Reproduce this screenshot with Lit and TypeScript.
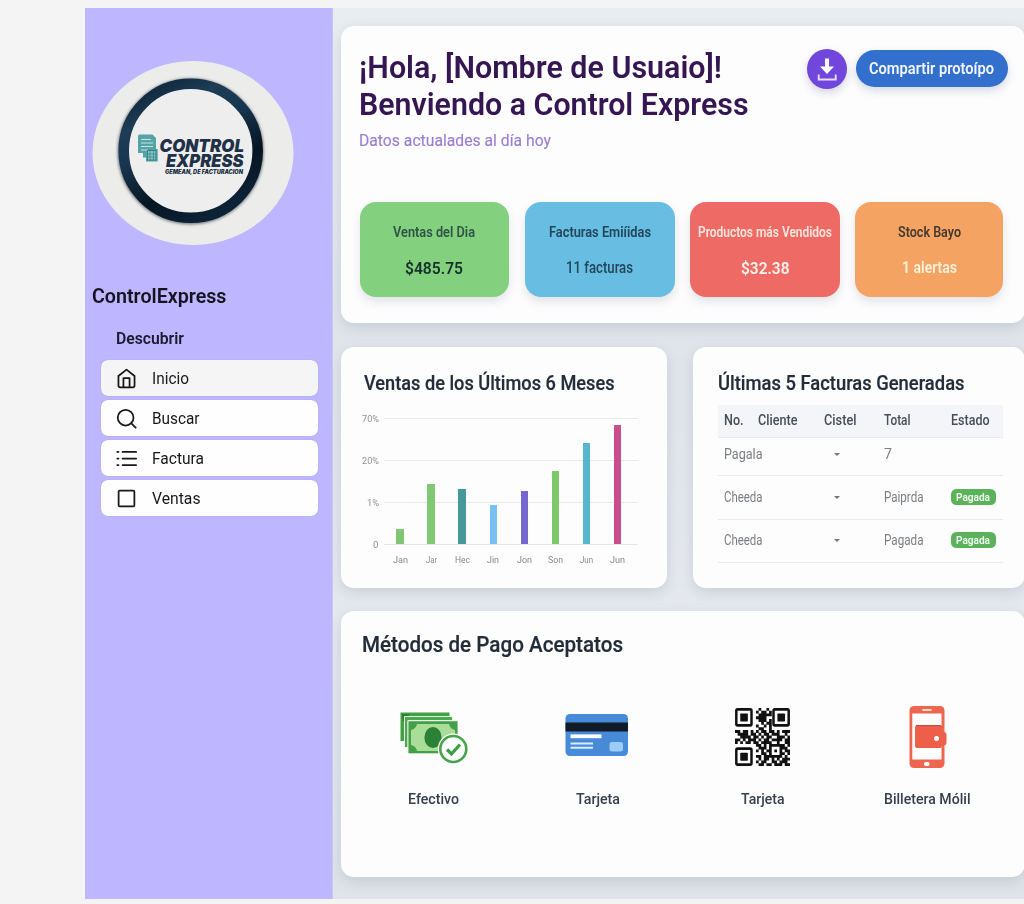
import { LitElement, html, svg, css } from "lit";
import { customElement, property, query } from "lit/decorators.js";

/** A single line of text stretched or narrowed to an exact measure. */
@customElement("fit-text")
class FitText extends LitElement {
  @property({ type: Number }) w = 0;
  @property() text = "";
  @query(".line") line!: HTMLElement;
  static styles = css`
    :host { display: block; flex: none; white-space: nowrap; }
    .line { display: inline-block; transform-origin: 0 50%; vertical-align: top; }
  `;
  updated() {
    this.style.width = `${this.w}px`;
    this.line.style.transform = "none";
    const natural = this.line.getBoundingClientRect().width;
    if (natural) this.line.style.transform = `scaleX(${this.w / natural})`;
  }
  render() {
    return html`<span class="line">${this.text}</span>`;
  }
}

const t = (text: string, w: number) => html`<fit-text .text=${text} .w=${w}></fit-text>`;

const icons = {
  home: svg`<path d="M2.800 9.200 12 1.800l9.200 7.400V20a2 2 0 0 1-2 2H4.800a2 2 0 0 1-2-2z"/><path d="M8.500 21.500V11.500h7v10"/>`,
  search: svg`<circle cx="11" cy="11" r="9"/><path d="m17.500 17.500 5 5"/>`,
  list: svg`<path d="M7.500 4.500H23M7.500 12H23M7.500 19.500H23M1.500 4.500h1.300M1.500 12h1.300M1.500 19.500h1.300"/>`,
  square: svg`<rect x="3" y="3" width="18" height="18" rx="1.200"/>`,
};

const nav = [
  { icon: icons.home, label: "Inicio", w: 37, active: true },
  { icon: icons.search, label: "Buscar", w: 47.5 },
  { icon: icons.list, label: "Factura", w: 52 },
  { icon: icons.square, label: "Ventas", w: 48.5 },
];

const stats = [
  { cls: "green", label: "Ventas del Dia", lw: 82, value: "$485.75", vw: 58 },
  { cls: "blue", label: "Facturas Emiíidas", lw: 102, value: "11 facturas", vw: 67 },
  { cls: "red", label: "Productos más Vendidos", lw: 134, value: "$32.38", vw: 48.5 },
  { cls: "orange", label: "Stock Bayo", lw: 63, value: "1 alertas", vw: 55 },
];

const bars = [
  { label: "Jan", w: 15, h: 15, c: "#80c674" },
  { label: "Jar", w: 11, h: 60, c: "#80c874" },
  { label: "Hec", w: 15, h: 55, c: "#46999a" },
  { label: "Jin", w: 12, h: 39.5, c: "#78c0f1" },
  { label: "Jon", w: 15, h: 53, c: "#7468ce" },
  { label: "Son", w: 15, h: 73, c: "#7dc869" },
  { label: "Jun", w: 13, h: 101.5, c: "#58b5d0" },
  { label: "Jun", w: 15, h: 119.5, c: "#c94f8c" },
];

/* Data modules only; the three finder squares are drawn as shapes. */
const QR = [
  "000000000100100000000",
  "000000001011010000000",
  "000000000111110000000",
  "000000001111000000000",
  "000000000111010000000",
  "000000000010110000000",
  "000000001001010000000",
  "000000000110010000000",
  "110110101011011010111",
  "011110110101101110010",
  "001111011010110011101",
  "110101110101101111011",
  "101011011011110010011",
  "000000001101011111101",
  "000000000111010001110",
  "000000001010110101011",
  "000000000011010001101",
  "000000001101111111010",
  "000000000101101010111",
  "000000001011001101110",
  "000000000110110111011",
];
const qrPath = QR.map((row, y) =>
  [...row].map((b, x) => (b === "1" ? `M${x} ${y}h1.03v1.03h-1.03z` : "")).join("")
).join("");
const finder = (x: number, y: number) => svg`
  <rect x=${x + 0.5} y=${y + 0.5} width="5.800" height="5.800" rx=".5" fill="none" stroke="#111" stroke-width=".95"/>
  <rect x=${x + 2} y=${y + 2} width="2.900" height="2.900" rx=".3" fill="#111"/>`;

const cash = html`<svg width="70" height="56" viewBox="399 710 70 56">
  <path d="M400.500 712.500h49v4h-45v24.500h-4z" fill="#43a047"/>
  <path d="M402 714h8l-7 8z" fill="#2c7d35"/>
  <path d="M404.500 716.500h48v4h-44.500v27h-3.500z" fill="#4aa84e" stroke="#fff" stroke-width=".8"/>
  <rect x="408" y="720.800" width="50" height="33" fill="#43a047" stroke="#fff" stroke-width=".8"/>
  <path d="M417 724h32q1 5 6 6v15q-5 1-6 6h-32q-1-5-6-6v-15q5-1 6-6z" fill="#a9dd98"/>
  <ellipse cx="433" cy="737.500" rx="8.600" ry="10.600" fill="#2b8136"/>
  <circle cx="453.300" cy="749" r="15.500" fill="#fff"/>
  <circle cx="453.300" cy="749" r="13" fill="#fbfffb" stroke="#46a34b" stroke-width="2.600"/>
  <path d="m447 749.500 4.500 4.500 8.500-9.500" fill="none" stroke="#3c9d45" stroke-width="3.200"/>
</svg>`;
const card = html`<svg width="64" height="44" viewBox="0 0 64 44">
  <rect x=".5" y="1" width="62.500" height="42" rx="4.500" fill="#478ad8"/>
  <rect x=".5" y="9.500" width="62.500" height="9" fill="#111a27"/>
  <path d="M5.500 23.300h31" stroke="#fff" stroke-width="3.800"/>
  <path d="M5.500 30.500h22.500M5.500 34.800h22.500" stroke="#d9edff" stroke-width="2"/>
  <rect x="44.500" y="29" width="13.500" height="9.500" rx="2.500" fill="#9dccf8"/>
</svg>`;
const qr = html`<svg width="55" height="58" viewBox="0 0 21 21" preserveAspectRatio="none">
  <path d=${qrPath} fill="#111"/>${finder(0, 0)}${finder(14.2, 0)}${finder(0, 14.2)}
</svg>`;
const phone = html`<svg width="38" height="64" viewBox="0 0 38 64">
  <rect x=".5" y="1" width="35" height="62" rx="4.500" fill="#ee6550"/>
  <rect x="3.300" y="8.500" width="29.200" height="46" fill="#fff"/>
  <path d="M14 5h8" stroke="#fff" stroke-width="1.700" stroke-linecap="round"/>
  <rect x="15" y="57" width="5.500" height="4" rx="1.800" fill="#fff"/>
  <path d="M6 23q0-3 3-3h21q3 0 3 3v4h1.500q3 0 3 3v7.500q0 3-3 3H33v.5q0 2-2 2H8q-2 0-2-2z" fill="#ee5f4a"/>
  <path d="M7 20.500h23q2.500 0 3 2" fill="none" stroke="#c94a3b" stroke-width="1"/>
  <circle cx="27.500" cy="33.500" r="2.500" fill="#fff"/>
</svg>`;

const logo = html`<svg class="logo" viewBox="92 60 203 186">
  <defs>
    <linearGradient id="ring" x1=".1" y1="0" x2=".6" y2="1">
      <stop offset="0" stop-color="#0d2235"/><stop offset=".25" stop-color="#1d3d56"/>
      <stop offset=".45" stop-color="#17364f"/><stop offset=".75" stop-color="#071522"/><stop offset="1" stop-color="#0c2236"/>
    </linearGradient>
    <filter id="soft" x="-20%" y="-20%" width="140%" height="140%"><feGaussianBlur stdDeviation="1.400"/></filter>
  </defs>
  <ellipse cx="193" cy="153" rx="100.500" ry="92" fill="#ececeb"/>
  <circle cx="190.600" cy="151.500" r="67.500" fill="none" stroke="#72777e" stroke-width="11" filter="url(#soft)"/>
  <circle cx="190.700" cy="150.800" r="67" fill="#eeeeef" stroke="url(#ring)" stroke-width="10.600"/>
  <path d="M138 136q0-1.500 1.500-1.500h13l3.500 3.500v11h1.700V161.500H146v-4h-3V153h-5z" fill="#55a3a5"/>
  <path d="M141 139.500h10M141 143h12M141 146.500h12M141 150h7" stroke="#c4e3e2" stroke-width="1.200"/>
  <rect x="147.500" y="150.500" width="8.500" height="9.500" fill="#8cc5c5" stroke="#2f7f84" stroke-width=".9"/>
  <path d="M150 151v9M153.500 151v9M148 154h8M148 157h8" stroke="#39888c" stroke-width=".8"/>
  <g class="brand">
    <text x="159.500" y="151.800" font-size="17.500" textLength="84.500" lengthAdjust="spacingAndGlyphs">CONTROL</text>
    <text x="166" y="166.800" font-size="17" textLength="77.500" lengthAdjust="spacingAndGlyphs">EXPRESS</text>
    <text x="165" y="173.500" font-size="5.600" textLength="78" lengthAdjust="spacingAndGlyphs">GEMEAN, DE FACTURACION</text>
  </g>
</svg>`;

@customElement("app-root")
class AppRoot extends LitElement {
  static styles = css`
    :host {
      display: block; width: 1024px; height: 904px; overflow: hidden;
      background: #f4f4f4; font-family: Roboto, "Liberation Sans", sans-serif; color: #2a333f;
    }
    * { box-sizing: border-box; }
    .shell { display: flex; margin: 8px 0 0 85px; height: 891px; }
    aside { flex: none; width: 248px; background: #beb6fe; padding: 52px 0 0 7px; border-right: 1px solid #c9c4f8; }
    .logo { display: block; width: 203px; height: 186px; }
    .brand { font-family: Inter, sans-serif; font-weight: 900; font-style: italic; fill: #1f3146; }
    .name { margin: 38.500px 0 0 0; font-size: 19.500px; line-height: 24px; font-weight: 600; color: #15131f; }
    .section { margin: 20px 0 0 24px; font-size: 16px; line-height: 20px; font-weight: 600; color: #1c1930; }
    nav { display: grid; gap: 4px; margin: 11.500px 0 0 9px; width: 217px; }
    .item { display: flex; align-items: center; gap: 15px; height: 36px; padding-left: 15px; border-radius: 7px; background: #fefefe; font-size: 16px; color: #17171a; box-shadow: 0 0 1px #8f88d4; }
    .item.active { background: #f5f5f6; }
    .item svg { width: 21px; height: 21px; fill: none; stroke: #17171a; stroke-width: 2; stroke-linejoin: round; stroke-linecap: round; }
    main { flex: 1; display: grid; grid-template-rows: 297px 241px 266px; row-gap: 23.500px; padding: 18px 0 0 7.500px; background: linear-gradient(#e8edf1, #e0e5ea 38%, #e5e9ee 66%, #dfe4ea 96%); overflow: hidden; }
    .card { background: #fdfdfe; border-radius: 13px; box-shadow: 0 5px 14px rgba(96, 112, 134, .2); }
    .pair { display: grid; grid-template-columns: 326.500px 332px; column-gap: 26px; }
    .hero { padding: 23px 17.500px 0 19px; width: 684.500px; }
    .top { display: flex; justify-content: space-between; height: 152.500px; }
    h1, h2 { margin: 0; font-weight: 600; }
    h1 { font-size: 31px; line-height: 37px; color: #351652; }
    h1 fit-text, .sub { margin-left: -.5px; }
    .sub { font-size: 17px; line-height: 24px; margin-top: 5px; color: #9a7dd2; -webkit-text-stroke: .15px #9a7dd2; }
    .actions { display: flex; gap: 9px; margin-top: -1px; }
    .dl { width: 40px; height: 40px; margin-top: .5px; border-radius: 50%; background: #7146da; box-shadow: 0 4px 8px rgba(60, 50, 120, .2); }
    .pill { display: flex; align-items: center; justify-content: center; width: 152px; height: 37.500px; margin-top: 1.500px; border-radius: 19px; background: #3370cd; color: #f1f6ff; font-size: 16.500px; font-weight: 600; box-shadow: 0 4px 9px rgba(40, 60, 100, .18); }
    .stats { display: grid; grid-template-columns: 149.500px 150px 149.500px 148px; gap: 15.500px; margin-right: -2px; }
    .stat { display: flex; flex-direction: column; align-items: center; height: 95px; padding-top: 19px; border-radius: 16px; box-shadow: 0 5px 10px rgba(70, 80, 100, .14); }
    .label { font-size: 14px; line-height: 22px; font-weight: 600; }
    .value { margin-top: 14px; font-size: 17px; line-height: 22px; font-weight: 600; }
    .green { background: #83d07f; color: #2f5446; } .green .value { color: #15312a; }
    .blue { background: #67bee2; color: #224559; } .blue .value { font-weight: 500; font-size: 16px; }
    .red { background: #ed6b64; color: #ffe6df; } .red .value { color: #fff1eb; }
    .orange { background: #f4a363; color: #463a30; } .orange .value { color: #fff0da; font-size: 16px; }
    .chart-card { padding: 24px 0 0 21px; }
    h2 { font-size: 20px; line-height: 25px; font-weight: 500; color: #232d3a; -webkit-text-stroke: .2px #232d3a; }
    .chart-card h2 { margin-left: 2.500px; }
    .chart { display: grid; grid-template-columns: 17px 254px; column-gap: 5px; margin-top: 17.500px; }
    .ylab { height: 132px; display: flex; flex-direction: column; align-items: flex-end; gap: 30px; font-size: 9.500px; line-height: 12px; color: #8e9196; }
    .plot { height: 127px; margin-top: 5px; padding-left: 1px; display: grid; grid-template-columns: repeat(8, 31.100px); align-items: end; justify-items: center; background: linear-gradient(#e9eaec 0 1px, transparent 1px) 0 0 / 100% 42px; border-bottom: 1px solid #e3e4e7; }
    .bar { width: 7.500px; }
    .xlab { grid-column: 2; padding-left: 1px; margin-top: 8px; display: grid; grid-template-columns: repeat(8, 31.100px); justify-items: center; font-size: 9.500px; line-height: 13px; color: #85888e; }
    .table-card { padding: 24px 0 0 24.500px; }
    .table-card h2 { margin-left: .5px; }
    .row { display: grid; grid-template-columns: 34.500px 65.500px 60px 67px 1fr; align-items: center; width: 285.500px; padding-left: 6px; border-bottom: 1px solid #e9eaec; font-size: 14px; color: #7a7d82; }
    .head { height: 33px; margin-top: 9px; padding-bottom: 1px; background: #f4f5f8; font-weight: 500; color: #474d58; }
    .r1 { height: 38px; padding-bottom: 4px; } .r2 { height: 44px; } .r3 { height: 43px; padding-bottom: 1px; }
    .caret { margin-left: 10.500px; border: 3px solid transparent; border-top: 3.500px solid #74777c; border-bottom: 0; width: 0; }
    .wide { grid-column: span 2; }
    .badge { width: 45px; height: 15.500px; display: flex; align-items: center; justify-content: center; border-radius: 5.500px; background: #5cb25b; color: #effff0; font-size: 11.500px; font-weight: 600; }
    .pay { padding: 20.500px 0 0 21.500px; width: 684.500px; }
    .pay h2 { font-size: 21.500px; }
    .methods { display: grid; grid-template-columns: repeat(4, 164.500px); margin: 47.500px 0 0 -10.500px; }
    .method { display: flex; flex-direction: column; align-items: center; font-size: 14.500px; line-height: 20px; font-weight: 500; color: #36404d; }
    .pic { height: 65px; display: flex; align-items: center; margin-bottom: 20.500px; }
    .cash { padding-top: 2px; } .cc { padding: 0 2px 3px 0; } .mobile { padding-left: 2px; }
  `;

  private row(cls: string, first: string, total: string, tw: number, paid: boolean) {
    return html`<div class="row ${cls}">
      <div class="wide">${t(first, 38.5)}</div><i class="caret"></i>${t(total, tw)}
      ${paid ? html`<span class="badge">${t("Pagada", 34)}</span>` : ""}
    </div>`;
  }

  render() {
    return html`<div class="shell">
      <aside>
        ${logo}
        <div class="name">${t("ControlExpress", 134.5)}</div>
        <div class="section">${t("Descubrir", 68)}</div>
        <nav>${nav.map((n) => html`<div class="item ${n.active ? "active" : ""}">
          <svg viewBox="0 0 24 24">${n.icon}</svg>${t(n.label, n.w)}</div>`)}</nav>
      </aside>
      <main>
        <section class="card hero">
          <div class="top">
            <div>
              <h1>${t("¡Hola, [Nombre de Usuaio]!", 363)}${t("Benviendo a Control Express", 389.5)}</h1>
              <div class="sub">${t("Datos actualades al día hoy", 192)}</div>
            </div>
            <div class="actions">
              <svg class="dl" viewBox="0 0 40 40"><path d="M18 9.500h4v8h5l-7 7.500-7-7.500h5z" fill="#fff"/><path d="M11.700 25.500v5h17v-5" fill="none" stroke="#e9dcff" stroke-width="1.900"/></svg>
              <div class="pill">${t("Compartir protoípo", 125)}</div>
            </div>
          </div>
          <div class="stats">${stats.map((s) => html`<div class="stat ${s.cls}">
            <div class="label">${t(s.label, s.lw)}</div><div class="value">${t(s.value, s.vw)}</div></div>`)}</div>
        </section>
        <div class="pair">
          <section class="card chart-card">
            <h2>${t("Ventas de los Últimos 6 Meses", 250.5)}</h2>
            <div class="chart">
              <div class="ylab">${t("70%", 17)}${t("20%", 17)}${t("1%", 12)}${t("0", 5.5)}</div>
              <div class="plot">${bars.map((b) => html`<div class="bar" style="height:${b.h}px;background:${b.c}"></div>`)}</div>
              <div class="xlab">${bars.map((b) => t(b.label, b.w))}</div>
            </div>
          </section>
          <section class="card table-card">
            <h2>${t("Últimas 5 Facturas Generadas", 246.5)}</h2>
            <div class="row head">${t("No.", 19.5)}${t("Cliente", 39.5)}${t("Cistel", 32.5)}${t("Total", 26.5)}${t("Estado", 38.5)}</div>
            ${this.row("r1", "Pagala", "7", 8, false)}
            ${this.row("r2", "Cheeda", "Paiprda", 39.5, true)}
            ${this.row("r3", "Cheeda", "Pagada", 39.5, true)}
          </section>
        </div>
        <section class="card pay">
          <h2>${t("Métodos de Pago Aceptatos", 261)}</h2>
          <div class="methods">
            <div class="method"><div class="pic cash">${cash}</div>${t("Efectivo", 51)}</div>
            <div class="method"><div class="pic cc">${card}</div>${t("Tarjeta", 44)}</div>
            <div class="method"><div class="pic">${qr}</div>${t("Tarjeta", 43.5)}</div>
            <div class="method"><div class="pic mobile">${phone}</div>${t("Billetera Mólil", 86.5)}</div>
          </div>
        </section>
      </main>
    </div>`;
  }
}
